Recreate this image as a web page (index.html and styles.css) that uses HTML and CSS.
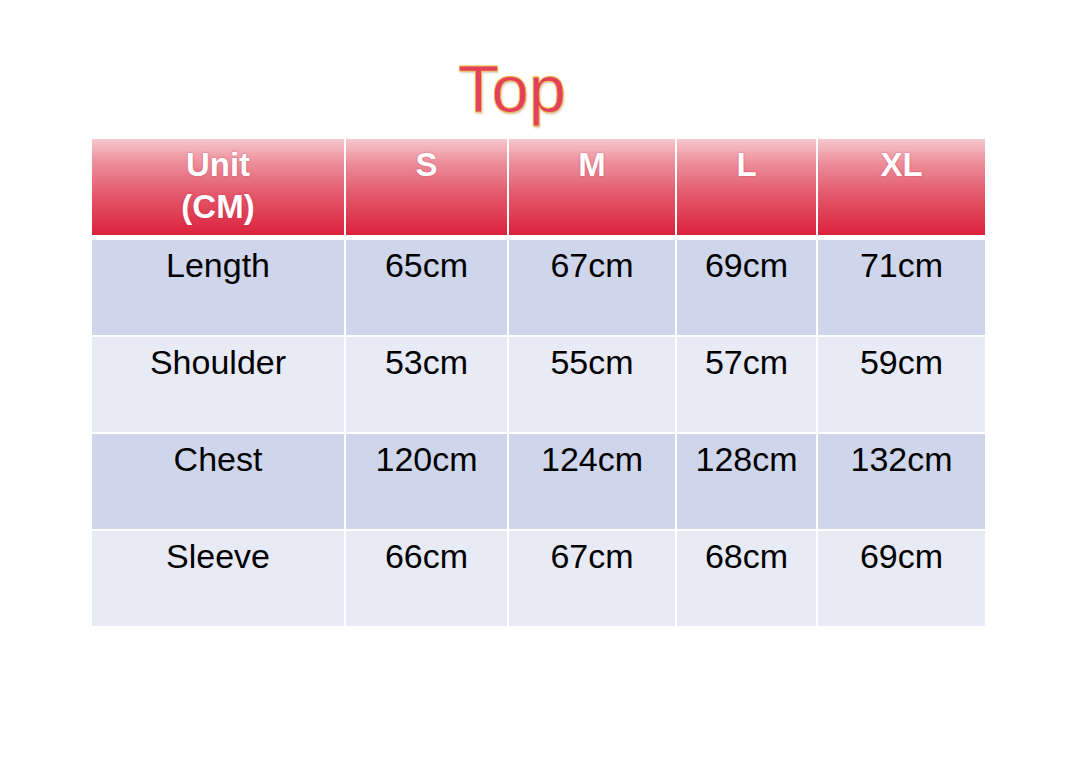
FILE: index.html
```html
<!DOCTYPE html>
<html lang="en">
<head>
<meta charset="utf-8">
<title>Top size chart</title>
<link rel="stylesheet" href="styles.css">
</head>
<body>
<main class="page">
  <h1 class="title">Top</h1>
  <div class="chart">
    <div class="row head">
      <div class="cell">Unit<br>(CM)</div>
      <div class="cell">S</div>
      <div class="cell">M</div>
      <div class="cell">L</div>
      <div class="cell">XL</div>
    </div>
    <div class="row dark">
      <div class="cell">Length</div>
      <div class="cell">65cm</div>
      <div class="cell">67cm</div>
      <div class="cell">69cm</div>
      <div class="cell">71cm</div>
    </div>
    <div class="row light">
      <div class="cell">Shoulder</div>
      <div class="cell">53cm</div>
      <div class="cell">55cm</div>
      <div class="cell">57cm</div>
      <div class="cell">59cm</div>
    </div>
    <div class="row dark">
      <div class="cell">Chest</div>
      <div class="cell">120cm</div>
      <div class="cell">124cm</div>
      <div class="cell">128cm</div>
      <div class="cell">132cm</div>
    </div>
    <div class="row light">
      <div class="cell">Sleeve</div>
      <div class="cell">66cm</div>
      <div class="cell">67cm</div>
      <div class="cell">68cm</div>
      <div class="cell">69cm</div>
    </div>
  </div>
</main>
</body>
</html>
```
FILE: styles.css
```css
html, body {
  margin: 0;
  padding: 0;
  background: #ffffff;
}

body {
  font-family: "Liberation Sans", Arial, sans-serif;
  width: 1080px;
  height: 757px;
  overflow: hidden;
}

.page {
  padding: 55px 0 0 92px;
  width: 893px;
}

.title {
  margin: 0 0 17px 0;
  padding-right: 53px;
  text-align: center;
  font-size: 67px;
  line-height: 67px;
  font-weight: normal;
  color: #e2405b;
  -webkit-text-stroke: 0.8px #f2b94e;
  text-shadow: 0 0 2px #f9d26a, 1px 2px 2px rgba(120, 90, 60, 0.3);
}

.chart {
  display: flex;
  flex-direction: column;
  gap: 2px;
}

.row {
  display: grid;
  grid-template-columns: 252px 161px 166px 139px 167px;
  column-gap: 2px;
  height: 95px;
}

.row.head {
  height: 96px;
  margin-bottom: 3px;
}

.cell {
  text-align: center;
  box-sizing: border-box;
}

.head .cell {
  background: linear-gradient(#f6c8cd 0%, #ec8e9a 25%, #e45c6e 55%, #df3d53 80%, #dc213b 100%);
  color: #ffffff;
  font-weight: bold;
  font-size: 33px;
  line-height: 42px;
  padding-top: 5px;
  text-shadow: 0 0 2px rgba(190, 30, 70, 0.55);
}

.dark .cell,
.light .cell {
  color: #000000;
  font-size: 34px;
  line-height: 39px;
  padding-top: 6px;
}

.dark .cell {
  background: #cfd5ea;
}

.light .cell {
  background: #e8eaf5;
}
```
